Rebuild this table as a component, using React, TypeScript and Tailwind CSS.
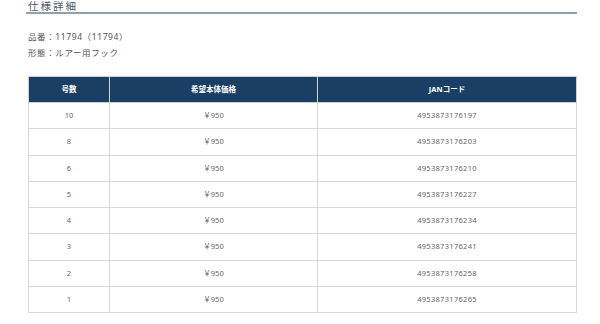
import React from 'react';

const rows = [
  { size: '10', price: '￥950', jan: '4953873176197' },
  { size: '8', price: '￥950', jan: '4953873176203' },
  { size: '6', price: '￥950', jan: '4953873176210' },
  { size: '5', price: '￥950', jan: '4953873176227' },
  { size: '4', price: '￥950', jan: '4953873176234' },
  { size: '3', price: '￥950', jan: '4953873176241' },
  { size: '2', price: '￥950', jan: '4953873176258' },
  { size: '1', price: '￥950', jan: '4953873176265' },
];

export default function App() {
  return (
    <div
      className="w-[600px] h-[324px] bg-white overflow-hidden"
      style={{ fontFamily: '"Noto Sans", "Noto Sans CJK JP", sans-serif' }}
    >
      <div className="pl-[26px] pr-[23px]">
        <h2 className="pt-[1px] pl-[2px] border-b-2 border-[#8fa2ab] text-[10.5px] leading-[11px] tracking-[2px] text-[#4a5a66]">
          仕様詳細
        </h2>

        <div className="pl-[2px] mt-[15px] text-[8.5px] leading-[16px] tracking-[0.6px] text-[#555]">
          <p>品番：11794（11794）</p>
          <p>形態：ルアー用フック</p>
        </div>

        <table className="mt-[15px] ml-[2px] w-[549px] border-collapse text-[7.5px] text-center">
          <thead>
            <tr className="bg-[#1b3f64] text-white font-bold h-[26px]">
              <th className="w-[81px] border border-[#d0d0d0] font-bold">号数</th>
              <th className="w-[208px] border border-[#d0d0d0] font-bold">希望本体価格</th>
              <th className="border border-[#d0d0d0] font-bold">JANコード</th>
            </tr>
          </thead>
          <tbody className="text-[#666]">
            {rows.map((r) => (
              <tr key={r.jan} className="h-[26.25px]">
                <td className="border border-[#d6d6d6]">{r.size}</td>
                <td className="border border-[#d6d6d6]">{r.price}</td>
                <td className="border border-[#d6d6d6] tracking-[0.3px]">{r.jan}</td>
              </tr>
            ))}
          </tbody>
        </table>
      </div>
    </div>
  );
}
